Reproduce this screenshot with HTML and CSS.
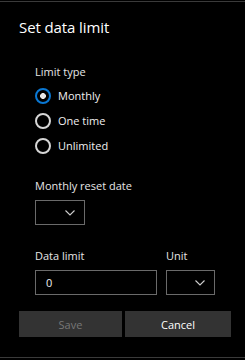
FILE: index.html
```html
<!DOCTYPE html>
<html lang="en">
  <head>
    <meta charset="UTF-8" />
    <meta name="viewport" content="width=device-width, initial-scale=1.0" />
    <title>Set data limit</title>
    <link rel="stylesheet" href="styles.css">
  </head>
  <body>
    <div class="dialog">
      <h1 class="title">Set data limit</h1>

      <div class="form">
        <div class="label">Limit type</div>
        <div class="radios">
          <div class="radio checked"><span class="dot"></span>Monthly</div>
          <div class="radio"><span class="dot"></span>One time</div>
          <div class="radio"><span class="dot"></span>Unlimited</div>
        </div>

        <div class="label reset-label">Monthly reset date</div>
        <div class="select small">
          <svg class="chev" width="10" height="6" viewBox="0 0 10 6"><path d="M0.5 0.5 L5 5 L9.5 0.5" fill="none" stroke="#cfcfcf" stroke-width="1.1"/></svg>
        </div>

        <div class="row">
          <div class="field">
            <div class="label">Data limit</div>
            <div class="input">0</div>
          </div>
          <div class="field">
            <div class="label">Unit</div>
            <div class="select unit">
              <svg class="chev" width="10" height="6" viewBox="0 0 10 6"><path d="M0.5 0.5 L5 5 L9.5 0.5" fill="none" stroke="#cfcfcf" stroke-width="1.1"/></svg>
            </div>
          </div>
        </div>
      </div>

      <div class="buttons">
        <button class="btn disabled">Save</button>
        <button class="btn">Cancel</button>
      </div>
    </div>
  </body>
</html>
```

FILE: styles.css
```css
body {
  margin: 0;
  padding: 0;
  background-color: #000;
  font-family: "Open Sans", "Noto Sans", sans-serif;
  color: #fff;
}
.dialog {
  width: 245px;
  box-sizing: border-box;
  border-top: 1px solid #3a3a3a;
  border-bottom: 1px solid #3a3a3a;
  margin-top: 1px;
  height: 357px;
  padding-top: 15px;
}
.title {
  margin: 0 0 0 19px;
  font-size: 15px;
  font-weight: normal;
  line-height: 20px;
  letter-spacing: -0.1px;
}
.form {
  padding-left: 35px;
  margin-top: 27px;
}
.label {
  font-size: 11px;
  line-height: 15px;
  color: #e6e6e6;
}
.radios {
  margin-top: 4px;
}
.radio {
  display: flex;
  align-items: center;
  height: 25px;
  font-size: 11px;
  color: #f0f0f0;
}
.dot {
  width: 12px;
  height: 12px;
  border: 2px solid #d6d6d6;
  border-radius: 50%;
  margin-right: 7px;
  box-sizing: content-box;
}
.radio.checked .dot {
  border-color: #0a78d4;
  background: radial-gradient(circle, #e8e8e8 0 2.6px, #000 3.2px);
}
.reset-label {
  margin-top: 20px;
}
.select {
  margin-top: 7px;
  height: 23px;
  border: 1px solid #6a6a6a;
  display: flex;
  align-items: center;
  justify-content: flex-end;
  padding-right: 9px;
  box-sizing: content-box;
}
.select.small {
  width: 39px;
}
.select.unit {
  width: 38px;
}
.chev {
  display: block;
}
.row {
  display: flex;
  gap: 9px;
  margin-top: 23px;
}
.input {
  margin-top: 7px;
  width: 110px;
  height: 23px;
  border: 1px solid #6a6a6a;
  font-size: 11px;
  line-height: 23px;
  padding-left: 10px;
  color: #f0f0f0;
}
.buttons {
  display: flex;
  gap: 3px;
  padding: 0 14px 0 19px;
  margin-top: 16px;
}
.btn {
  flex: 1;
  height: 26px;
  border: none;
  background-color: #333;
  color: #fff;
  font-family: inherit;
  font-size: 11px;
  padding: 0;
}
.btn.disabled {
  color: #777;
  width: 103px;
  flex: none;
}
```
